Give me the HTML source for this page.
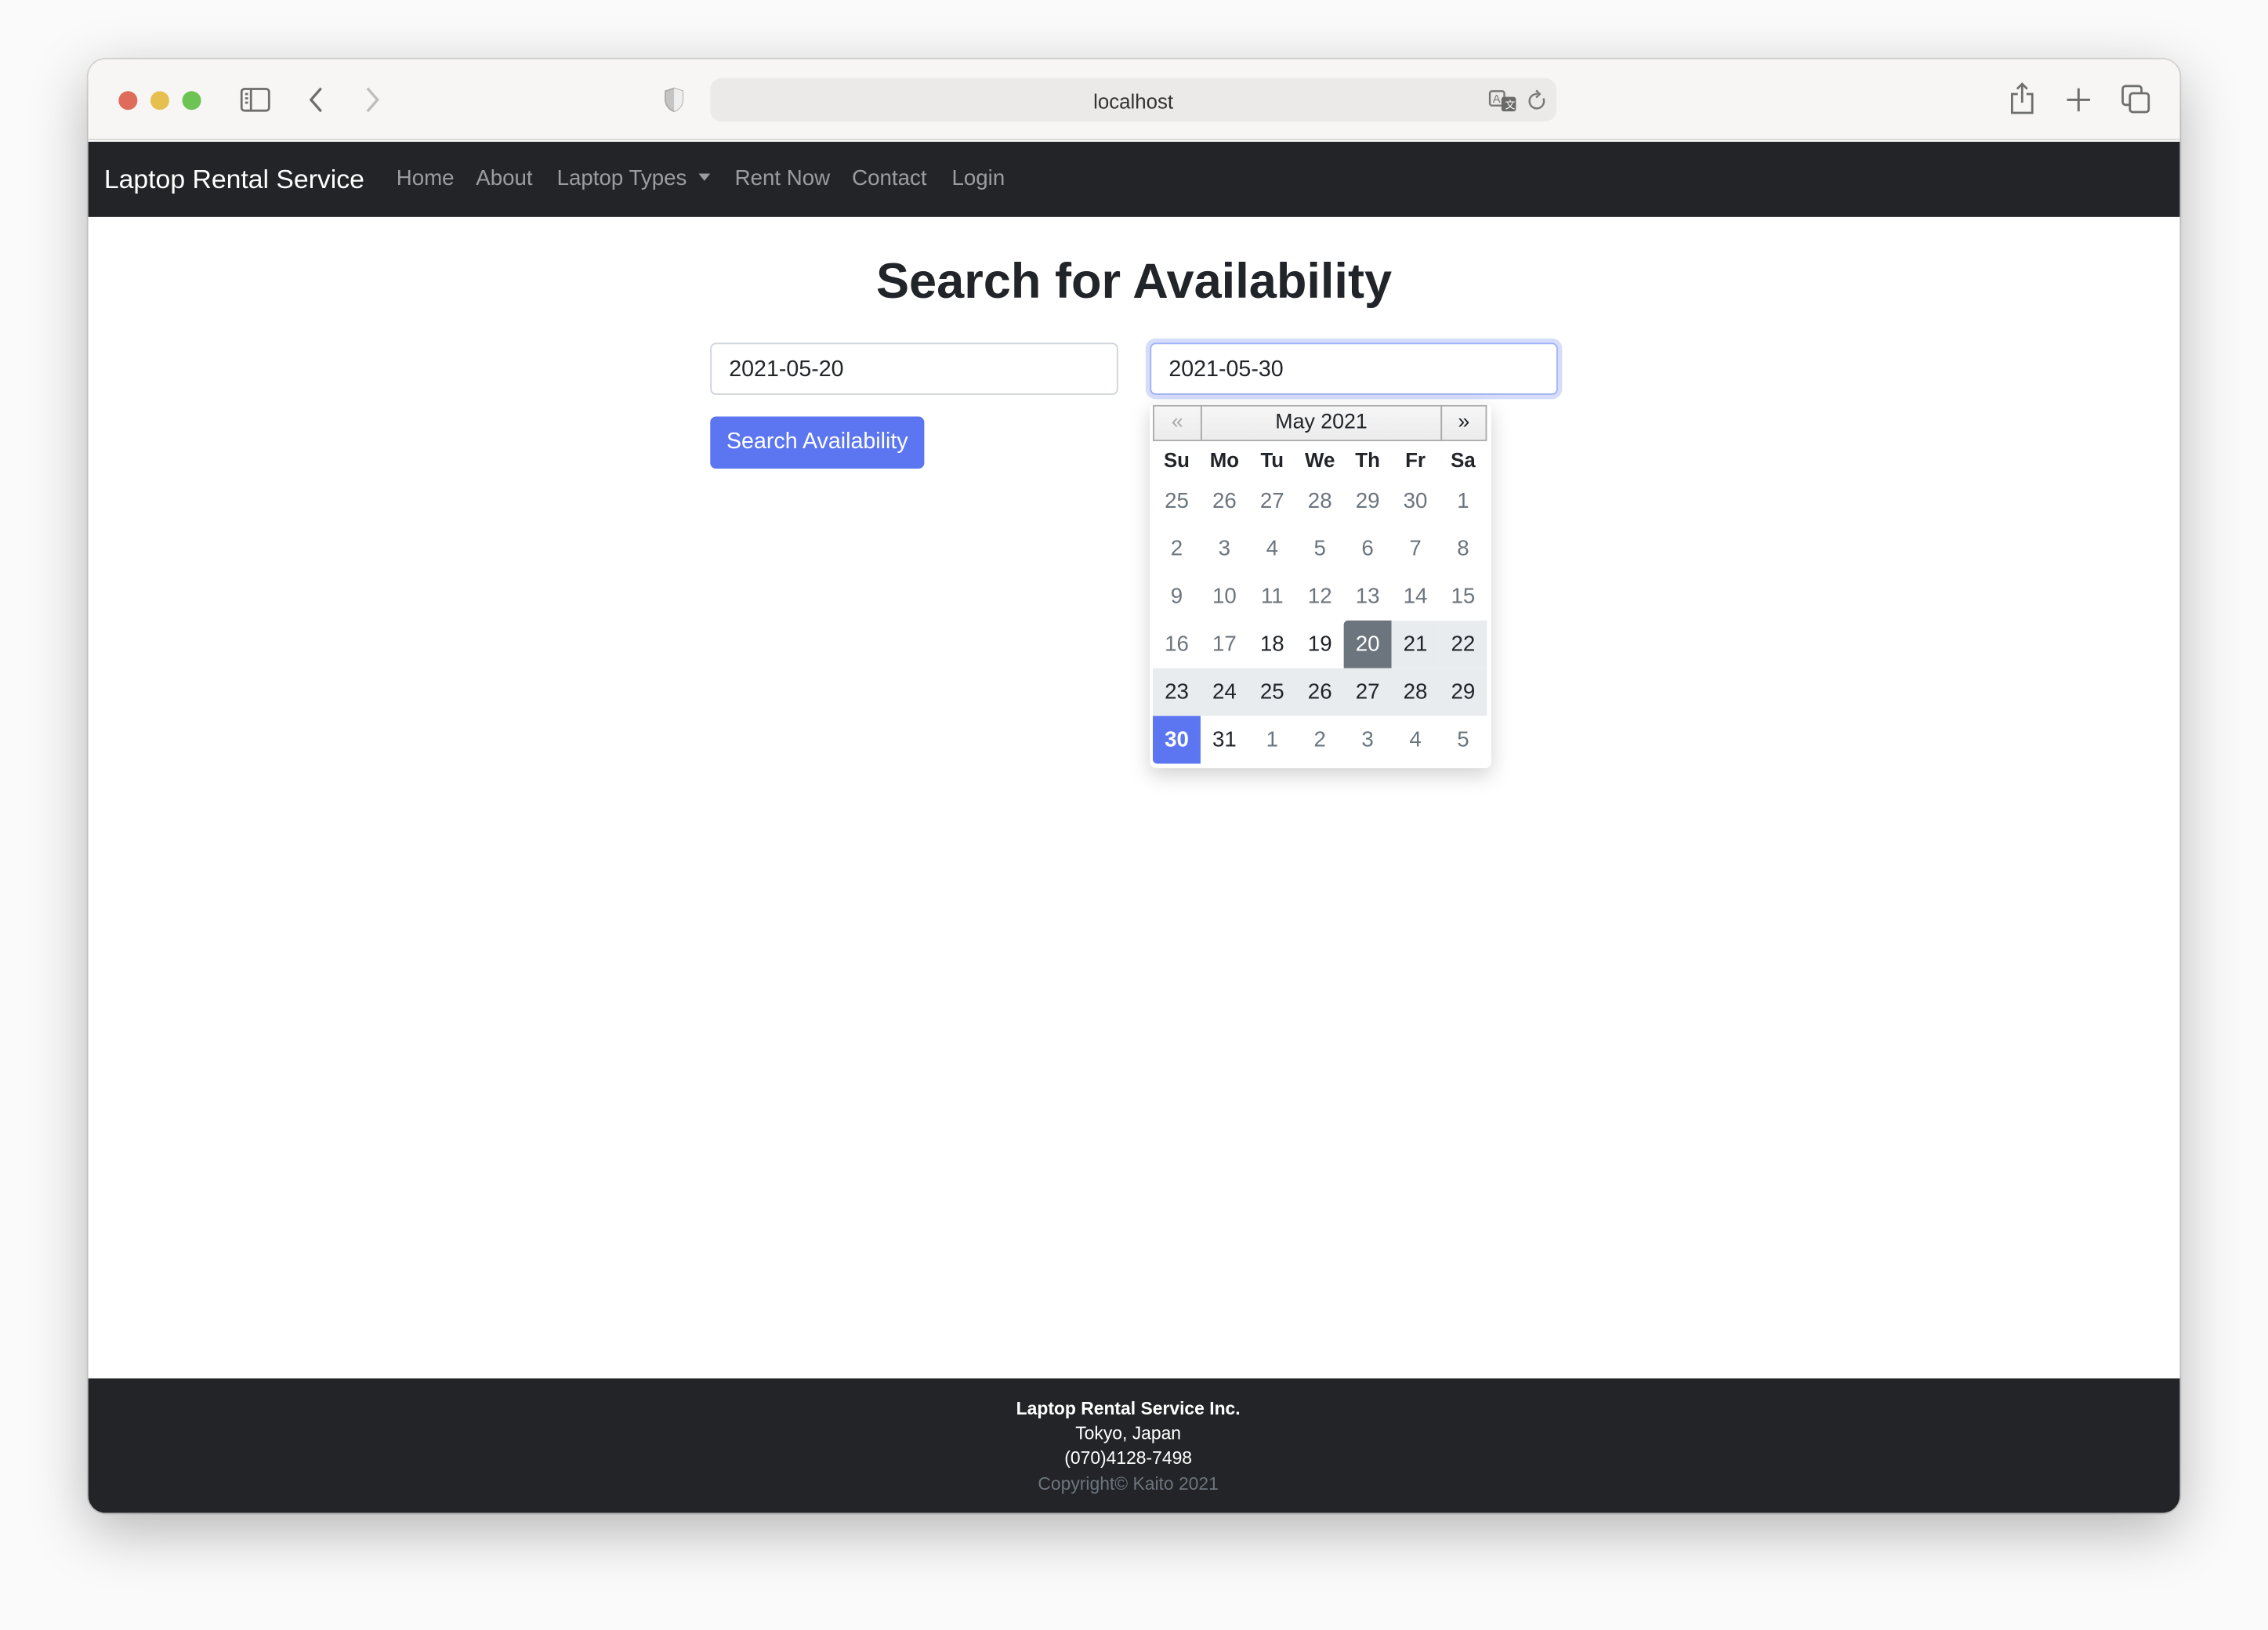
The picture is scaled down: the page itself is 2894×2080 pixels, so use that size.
<!DOCTYPE html>
<html><head><meta charset="utf-8"><style>
*{box-sizing:border-box;margin:0;padding:0}
html,body{width:2894px;height:2080px;overflow:hidden;background:#fafafa;font-family:"Liberation Sans",Arial,sans-serif}
#s{position:absolute;left:0;top:0;width:1568px;height:1127px;transform:scale(1.8457);transform-origin:0 0}
.a{position:absolute}
.win{left:61px;top:41px;width:1446px;height:1005px;border-radius:12px;overflow:hidden;background:#fff;box-shadow:0 12px 40px rgba(0,0,0,.28),0 0 0 1px rgba(0,0,0,.12)}
.tb{left:0;top:0;width:1446px;height:56px;background:#f7f6f4;border-bottom:1px solid #d8d8d8}
.dot{width:13px;height:13px;border-radius:50%;top:22px}
.nav{left:0;top:57px;width:1446px;height:52px;background:#222428}
.nl{top:74px;font-size:15px;color:rgba(255,255,255,.55)}
.inp{height:36px;border:1px solid #ced4da;border-radius:4px;font-size:15.5px;color:#212529;padding:9px 12px 8px;background:#fff}
.cal{left:795px;top:279px;width:236px;height:252px;background:#fff;border-radius:4px;box-shadow:0 5px 14px rgba(0,0,0,.18)}
.hc{top:1px;height:25px;background:linear-gradient(#f6f6f6,#ececec);border:1px solid #aaa;font-size:14.5px;text-align:center;line-height:23px;color:#212529}
.row{position:absolute;left:2px;width:231px;height:33px;display:flex}
.row div{width:33px;height:33px;text-align:center;line-height:33px;font-size:15px;color:#6c757d}
.d{color:#212529!important}
.ft{left:-4px;width:1446px;text-align:center;font-size:12.4px;color:#fff}
</style></head><body><div id="s">
<div class="a win">
 <div class="a tb">
  <div class="a dot" style="left:21px;background:#df6b5b"></div>
  <div class="a dot" style="left:43px;background:#e6c04f"></div>
  <div class="a dot" style="left:65px;background:#6dc353"></div>
  <svg class="a" style="left:105px;top:19px" width="22" height="18" viewBox="0 0 22 18" fill="none" stroke="#6e6e6e" stroke-width="1.5"><rect x="1" y="1.5" width="19" height="15" rx="2"/><line x1="7.5" y1="1.5" x2="7.5" y2="16.5"/><line x1="3.5" y1="5" x2="5.5" y2="5"/><line x1="3.5" y1="8" x2="5.5" y2="8"/><line x1="3.5" y1="11" x2="5.5" y2="11"/></svg>
  <svg class="a" style="left:152px;top:18px" width="12" height="20" viewBox="0 0 12 20" fill="none" stroke="#6e6e6e" stroke-width="1.8"><path d="M9 2 L2 10 L9 18"/></svg>
  <svg class="a" style="left:190px;top:18px" width="12" height="20" viewBox="0 0 12 20" fill="none" stroke="#bdbdbd" stroke-width="1.8"><path d="M3 2 L10 10 L3 18"/></svg>
  <svg class="a" style="left:398px;top:19px" width="14" height="18" viewBox="0 0 14 18"><path d="M7 1 L13 3 V9 C13 13 10 16 7 17 C4 16 1 13 1 9 V3 Z" fill="#c4c4c4" stroke="#aaa"/><path d="M7 1 V17 C10 16 13 13 13 9 V3 Z" fill="#eee"/></svg>
  <div class="a" style="left:430px;top:13px;width:585px;height:30px;background:#ebeae8;border-radius:8px"></div>
  <div class="a" style="left:430px;top:21px;width:585px;text-align:center;font-size:14px;color:#333">localhost</div>
  <svg class="a" style="left:968px;top:20px" width="22" height="18" viewBox="0 0 22 18"><rect x="1" y="2" width="10" height="10" rx="1.5" fill="none" stroke="#777" stroke-width="1.3"/><text x="3" y="10" font-size="8" fill="#777" font-family="Liberation Sans">A</text><rect x="9" y="6" width="10" height="10" rx="1.5" fill="#6a6a6a"/><text x="11.5" y="14" font-size="7" fill="#fff" font-family="Liberation Sans">文</text></svg>
  <svg class="a" style="left:995px;top:20px" width="14" height="18" viewBox="0 0 14 18" fill="none" stroke="#777" stroke-width="1.3"><path d="M11 7 A5 5 0 1 1 7 4"/><path d="M6 1.5 L8.5 4 L6 6.5"/></svg>
  <svg class="a" style="left:1328px;top:15px" width="18" height="24" viewBox="0 0 18 24" fill="none" stroke="#6e6e6e" stroke-width="1.5"><path d="M6 9 H2 V22 H16 V9 H12"/><path d="M9 2 V15 M5.5 5.5 L9 2 L12.5 5.5"/></svg>
  <svg class="a" style="left:1367px;top:19px" width="18" height="18" viewBox="0 0 18 18" stroke="#6e6e6e" stroke-width="1.6"><path d="M9 1 V17 M1 9 H17"/></svg>
  <svg class="a" style="left:1405px;top:17px" width="22" height="22" viewBox="0 0 22 22" fill="none" stroke="#6e6e6e" stroke-width="1.5"><rect x="1.5" y="1.5" width="13" height="13" rx="2"/><rect x="6.5" y="6.5" width="13" height="13" rx="2" fill="#f7f6f4"/></svg>
 </div>
 <div class="a nav"></div>
 <div class="a" style="left:11px;top:72px;font-size:18.3px;color:#fff">Laptop Rental Service</div>
 <div class="a nl" style="left:213px">Home</div>
 <div class="a nl" style="left:268px">About</div>
 <div class="a nl" style="left:324px">Laptop Types <span style="display:inline-block;width:0;height:0;border-left:4px solid transparent;border-right:4px solid transparent;border-top:5px solid rgba(255,255,255,.55);vertical-align:3px;margin-left:4px"></span></div>
 <div class="a nl" style="left:447px">Rent Now</div>
 <div class="a nl" style="left:528px">Contact</div>
 <div class="a nl" style="left:597px">Login</div>
 <div class="a" style="left:0;top:135px;width:1446px;text-align:center;font-size:34.2px;font-weight:bold;color:#212529">Search for Availability</div>
 <div class="a inp" style="left:430px;top:196px;width:282px">2021-05-20</div>
 <div class="a inp" style="left:734px;top:196px;width:282px;border-color:#9fb0f6;box-shadow:0 0 0 3px rgba(91,118,240,.25)">2021-05-30</div>
 <div class="a" style="left:430px;top:247px;width:148px;height:36px;background:#5b76f0;border-radius:4px;color:#fff;font-size:15.5px;text-align:center;line-height:36px">Search Availability</div>
 <div class="a" style="left:0;top:912px;width:1446px;height:93px;background:#222428"></div>
 <div class="a ft" style="top:926px;font-weight:bold">Laptop Rental Service Inc.</div>
 <div class="a ft" style="top:943px">Tokyo, Japan</div>
 <div class="a ft" style="top:960px">(070)4128-7498</div>
 <div class="a ft" style="top:978px;color:#6c757d">Copyright© Kaito 2021</div>
</div>
<div class="cal a">
 <div class="a hc" style="left:2px;width:34px;color:#aaa">«</div>
 <div class="a hc" style="left:35px;width:167px">May 2021</div>
 <div class="a hc" style="left:201px;width:32px">»</div>
 <div class="row" style="top:23px"><div class="d" style="font-weight:bold;font-size:14px">Su</div><div class="d" style="font-weight:bold;font-size:14px">Mo</div><div class="d" style="font-weight:bold;font-size:14px">Tu</div><div class="d" style="font-weight:bold;font-size:14px">We</div><div class="d" style="font-weight:bold;font-size:14px">Th</div><div class="d" style="font-weight:bold;font-size:14px">Fr</div><div class="d" style="font-weight:bold;font-size:14px">Sa</div></div>
 <div class="row" style="top:51px"><div>25</div><div>26</div><div>27</div><div>28</div><div>29</div><div>30</div><div>1</div></div>
 <div class="row" style="top:84px"><div>2</div><div>3</div><div>4</div><div>5</div><div>6</div><div>7</div><div>8</div></div>
 <div class="row" style="top:117px"><div>9</div><div>10</div><div>11</div><div>12</div><div>13</div><div>14</div><div>15</div></div>
 <div class="row" style="top:150px"><div>16</div><div>17</div><div class="d">18</div><div class="d">19</div><div style="background:#6c757d;color:#fff;border-radius:3px 0 0 0">20</div><div class="d" style="background:#e9ecef">21</div><div class="d" style="background:#e9ecef">22</div></div>
 <div class="row" style="top:183px;background:#e9ecef"><div class="d">23</div><div class="d">24</div><div class="d">25</div><div class="d">26</div><div class="d">27</div><div class="d">28</div><div class="d">29</div></div>
 <div class="row" style="top:216px"><div style="background:#5b76f0;color:#fff;font-weight:bold;border-radius:0 0 0 3px">30</div><div class="d">31</div><div>1</div><div>2</div><div>3</div><div>4</div><div>5</div></div>
</div>
</div></body></html>
